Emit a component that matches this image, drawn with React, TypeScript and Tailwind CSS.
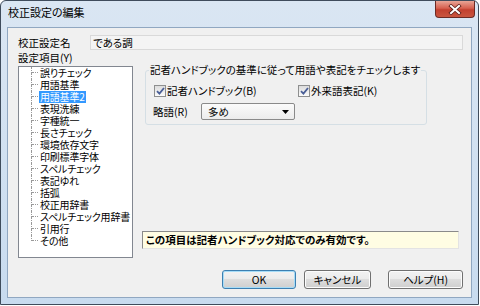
import React from "react";

const treeItems = [
  "誤りチェック",
  "用語基準",
  "用語基準2",
  "表現洗練",
  "字種統一",
  "長さチェック",
  "環境依存文字",
  "印刷標準字体",
  "スペルチェック",
  "表記ゆれ",
  "括弧",
  "校正用辞書",
  "スペルチェック用辞書",
  "引用行",
  "その他",
];

const Check = () => (
  <span className="flex h-[12px] w-[12px] items-center justify-center border border-[#8e8f8f] bg-[linear-gradient(#dcdcdc,#fbfbfb)]">
    <svg width="9" height="8" viewBox="0 0 9 8">
      <path d="M1 4.2 L3.4 6.6 L8 1" fill="none" stroke="#4a5f97" strokeWidth="1.8" />
    </svg>
  </span>
);

const btn =
  "flex h-[19px] items-center justify-center rounded-[3px] border bg-[linear-gradient(#f2f2f2_0%,#ebebeb_50%,#dddddd_50%,#cfcfcf_100%)]";

export default function App() {
  return (
    <div className="h-[306px] w-[480px] bg-white font-['Noto_Sans_CJK_JP',sans-serif] text-[10.5px] leading-[12px] text-black [font-feature-settings:'palt']">
      <div className="flex h-[305px] w-[479px] flex-col rounded-t-[6px] border border-[#3f4c5c] bg-[linear-gradient(#dae6f3,#c8dbef)]">
        {/* Title bar */}
        <div className="flex h-[26px] items-start justify-between">
          <div className="pl-[7px] pt-[5px] text-[11px]">校正設定の編集</div>
          <div className="mr-[3px] flex h-[17px] w-[40px] items-center justify-center rounded-b-[4px] border border-t-0 border-[#6b2a24] bg-[linear-gradient(#e8a596_0%,#d6604f_45%,#c2402f_55%,#c9553f_100%)]">
            <svg width="14" height="11" viewBox="0 0 14 11">
              <path d="M3 2 L11 9 M11 2 L3 9" stroke="#5b1d17" strokeWidth="3.6" strokeLinecap="square" />
              <path d="M3 2 L11 9 M11 2 L3 9" stroke="#ffffff" strokeWidth="2" strokeLinecap="square" />
            </svg>
          </div>
        </div>

        {/* Client area */}
        <div className="mx-[6px] mb-[6px] flex flex-1 flex-col border border-[#90a7c1] bg-[#f0f0f0] pl-[10px] pr-[8px] pt-[7px]">
          <div className="flex h-[15px] items-center">
            <div className="w-[72px]">校正設定名</div>
            <div className="flex h-[15px] flex-1 items-center border border-[#d9d9d9] bg-[#f4f4f4] pl-[2px]">である調</div>
          </div>
          <div className="mt-[2px] h-[12px]">設定項目(Y)</div>

          <div className="mt-[2px] flex h-[192px]">
            {/* Tree */}
            <div className="w-[115px] overflow-hidden border border-[#828790] bg-white text-[10px] leading-[12px] tracking-[-0.2px]">
              {treeItems.map((item, i) => {
                const last = i === treeItems.length - 1;
                return (
                  <div key={item} className="flex h-[12px] items-stretch whitespace-nowrap">
                    <div className="ml-[12px] flex w-[7px] shrink-0 flex-col">
                      <div className="flex h-[6px] items-end border-l border-dotted border-[#9a9a9a]">
                        <div className="w-full border-t border-dotted border-[#9a9a9a]" />
                      </div>
                      {!last && <div className="h-[6px] border-l border-dotted border-[#9a9a9a]" />}
                    </div>
                    <div
                      className={
                        i === 2
                          ? "ml-[1px] h-[12px] bg-[#3399ff] px-[1px] text-white"
                          : "ml-[1px] h-[12px] px-[1px]"
                      }
                    >
                      {item}
                    </div>
                  </div>
                );
              })}
            </div>

            {/* Right panel */}
            <div className="ml-[9px] flex flex-1 flex-col">
              <fieldset className="ml-[3px] mt-[-2px] w-[282px] rounded-[3px] border border-[#d5dfe5] pb-[4px]">
                <legend className="ml-[3px] px-[1px]">記者ハンドブックの基準に従って用語や表記をチェックします</legend>
                <div className="mt-[9px] flex h-[12px] items-center pl-[8px]">
                  <div className="flex w-[144px] items-center gap-[1px]">
                    <Check />
                    <span>記者ハンドブック(B)</span>
                  </div>
                  <div className="flex items-center gap-[1px]">
                    <Check />
                    <span>外来語表記(K)</span>
                  </div>
                </div>
                <div className="mt-[6px] flex items-center pl-[7px]">
                  <div className="w-[48px]">略語(R)</div>
                  <div className="flex h-[17px] w-[94px] items-center justify-between rounded-[2px] border border-[#8a8a8a] bg-[linear-gradient(#fbfbfb,#ececec)] pl-[6px] pr-[5px]">
                    <span>多め</span>
                    <svg width="7" height="4" viewBox="0 0 7 4">
                      <path d="M0 0 H7 L3.5 4 Z" fill="#000" />
                    </svg>
                  </div>
                </div>
              </fieldset>

              <div className="mb-[9px] mt-auto flex h-[18px] w-[317px] items-center border border-b-[#e3e3e3] border-l-[#8a8a8a] border-r-[#e3e3e3] border-t-[#8a8a8a] bg-[#fffde3] pl-[3px] font-bold">
                この項目は記者ハンドブック対応でのみ有効です。
              </div>
            </div>
          </div>

          {/* Buttons */}
          <div className="mt-[12px] flex justify-end">
            <div className={`${btn} w-[74px] border-[#3c7fb1] shadow-[inset_0_0_0_1px_#a6dcf7]`}>OK</div>
            <div className={`${btn} ml-[8px] w-[67px] border-[#707070] shadow-[inset_0_0_0_1px_#fcfcfc]`}>キャンセル</div>
            <div className={`${btn} ml-[17px] w-[75px] border-[#707070] shadow-[inset_0_0_0_1px_#fcfcfc]`}>ヘルプ(H)</div>
          </div>
        </div>
      </div>
    </div>
  );
}
